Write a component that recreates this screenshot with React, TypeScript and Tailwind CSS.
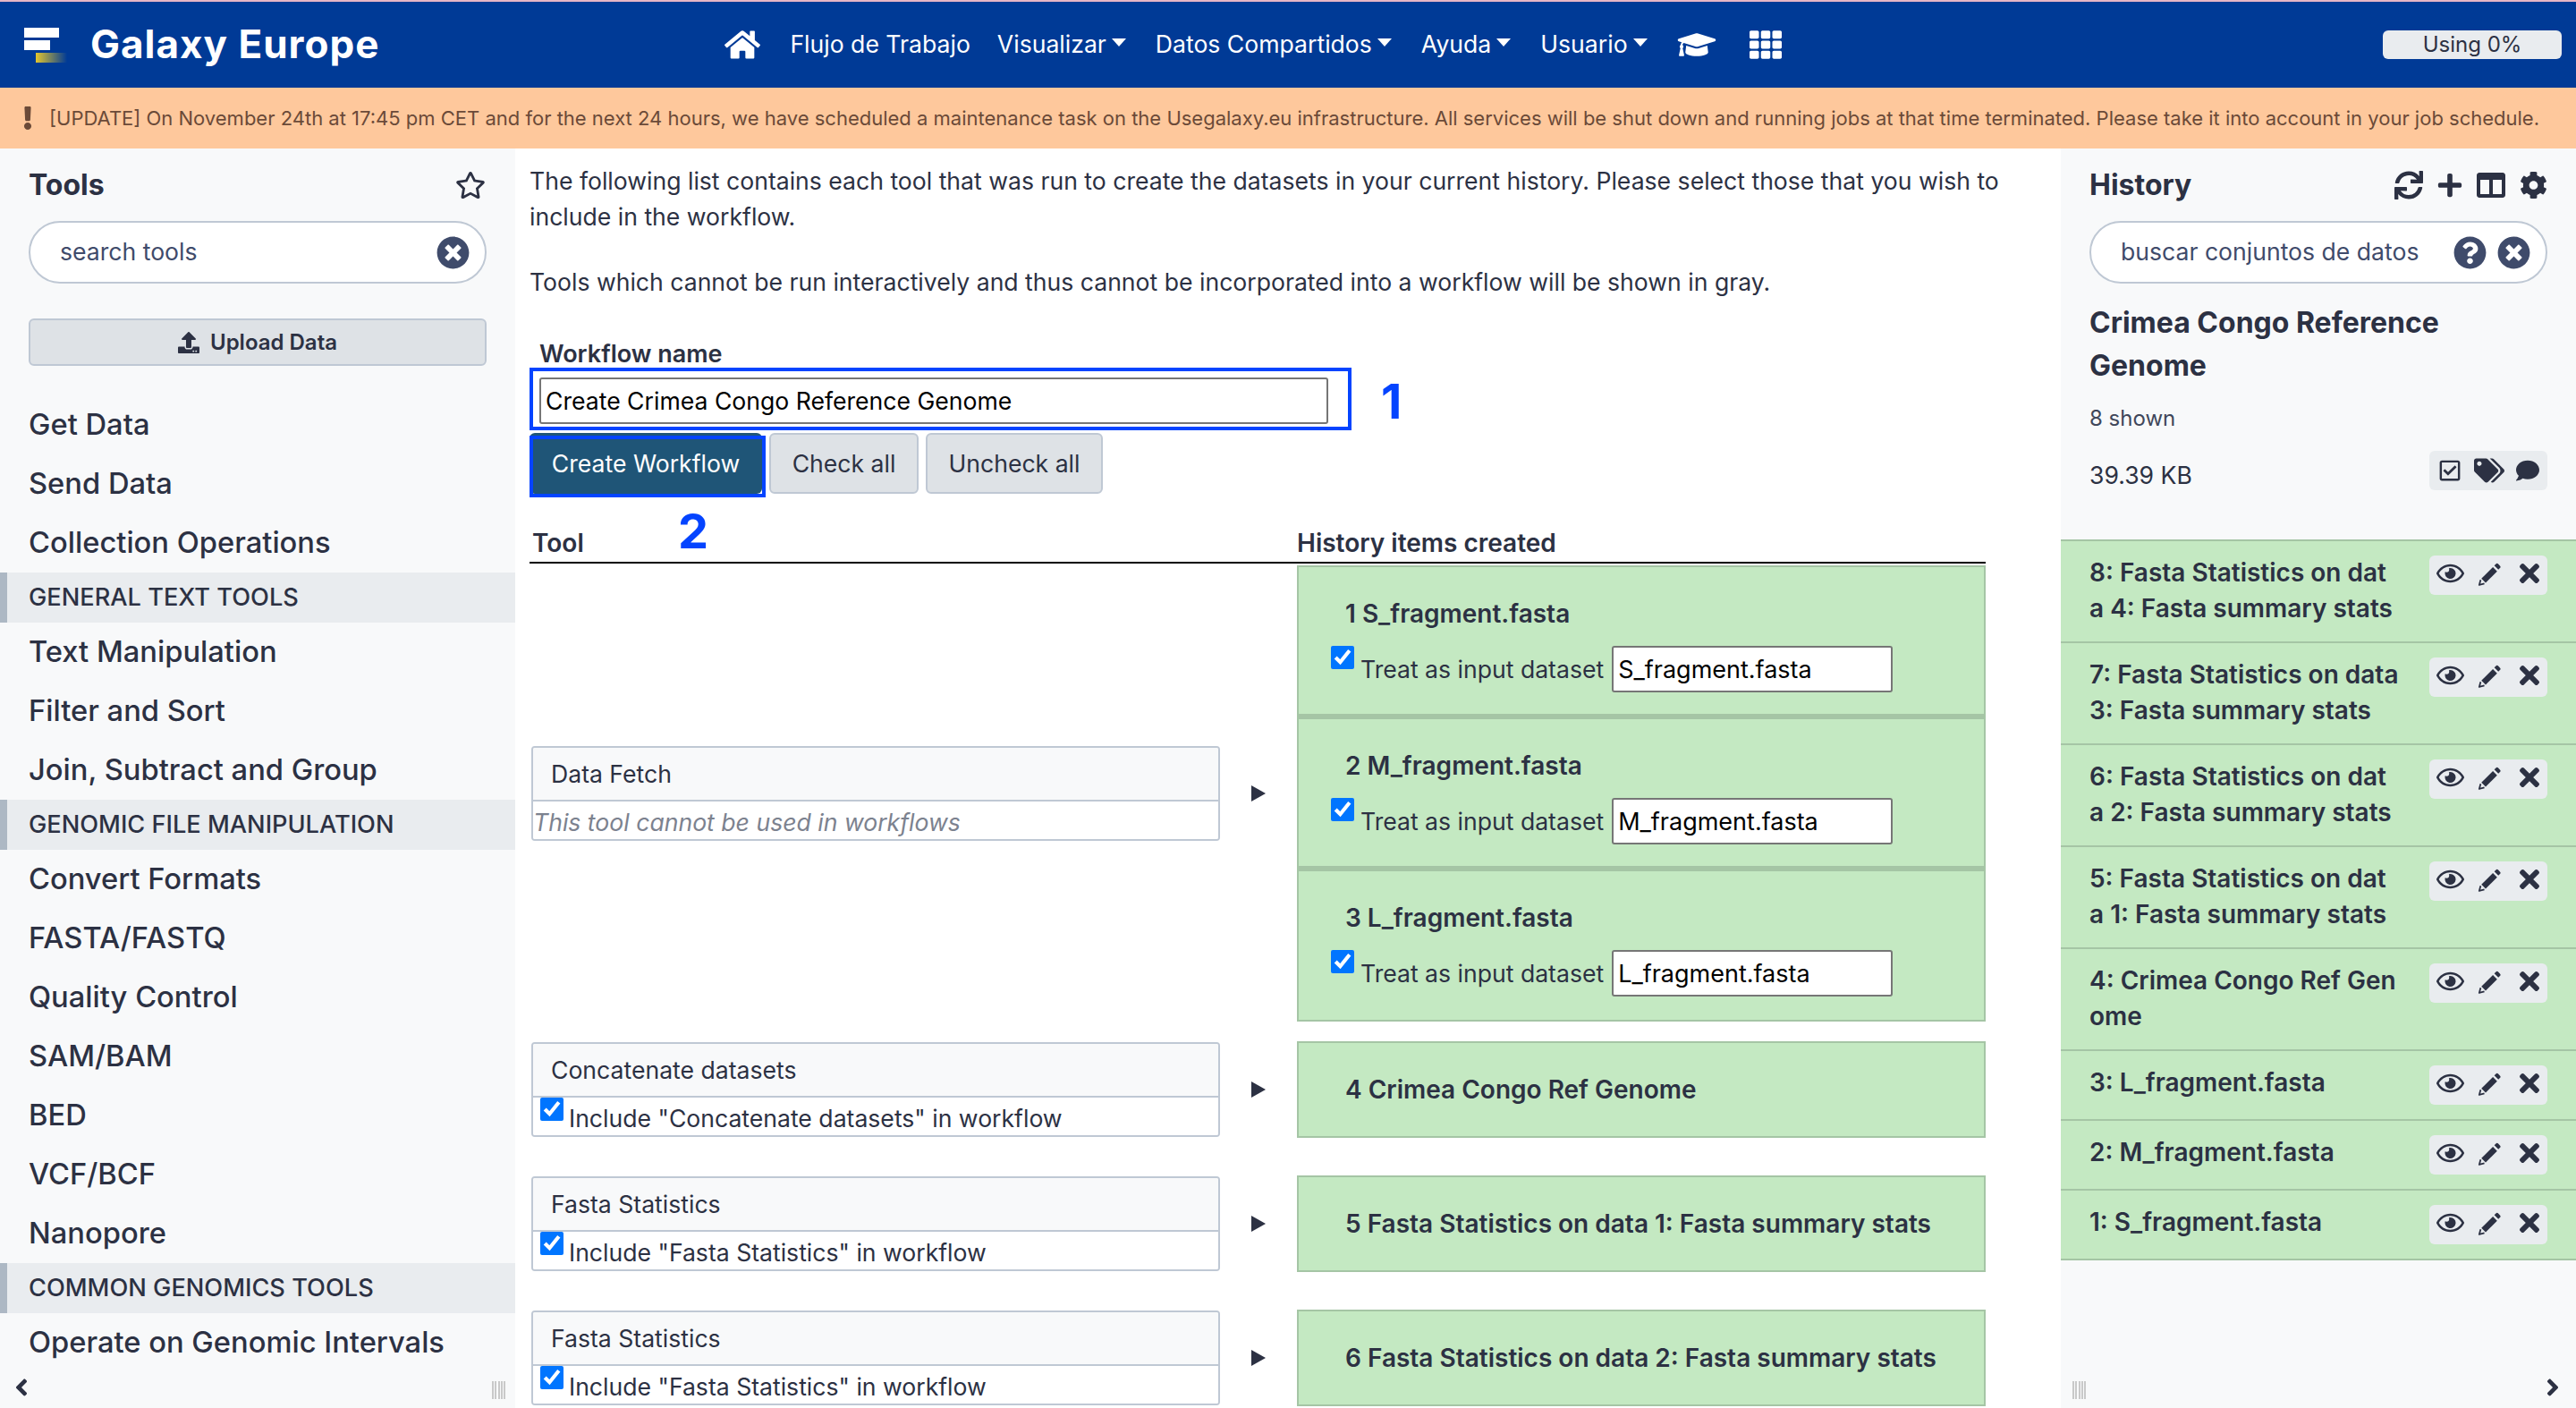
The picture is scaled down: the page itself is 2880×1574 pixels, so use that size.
import { FaCog, FaColumns, FaComment, FaExclamation, FaGraduationCap, FaHome, FaPlus, FaQuestionCircle, FaRegCheckSquare, FaRegEye, FaRegStar, FaSync, FaTags, FaTh, FaTimes, FaTimesCircle, FaUpload, FaAngleLeft, FaAngleRight } from 'react-icons/fa'

const NavLink = ({ label, caret, className }: { label: string; caret?: boolean; className?: string }) => (
  <span className={`flex items-center gap-[6px] ${className ?? ''}`}>
    {label}
    {caret && <span className="mb-[4px] h-0 w-0 border-x-[8px] border-t-[9px] border-x-transparent border-t-white" />}
  </span>
)

const Navbar = () => (
  <div className="relative flex h-[96px] shrink-0 items-center bg-[#003a96] text-[26.6px] text-white">
    <div className="ml-[27px] mr-[35px] flex w-[39px] flex-col gap-[3px]">
      <div className="h-[11px] w-[39px] bg-white" />
      <div className="h-[11px] w-[29px] bg-white" />
      <div className="ml-[13px] h-[11px] w-[35px] bg-gradient-to-r from-[#e3c62e] to-transparent" />
    </div>
    <span className="mb-[3px] text-[44px] font-bold tracking-[1px]">Galaxy Europe</span>
    <div className="ml-[386px] flex items-center gap-[33px]">
      <FaHome className="h-[36px] w-[40px]" />
      <NavLink label="Flujo de Trabajo" className="mr-[-3px]" />
      <NavLink label="Visualizar" caret />
      <NavLink label="Datos Compartidos" caret />
      <NavLink label="Ayuda" caret />
      <NavLink label="Usuario" caret />
      <FaGraduationCap className="h-[34px] w-[44px]" />
      <FaTh className="ml-[4px] h-[36px] w-[36px]" />
    </div>
    <div className="ml-auto mr-[16px] flex h-[32px] w-[200px] items-center justify-center rounded-[6px] bg-[#e9ecef] text-[24px] text-[#2c3143]">
      Using 0%
    </div>
  </div>
)

const toolItems = [
  { label: 'Get Data' },
  { label: 'Send Data' },
  { label: 'Collection Operations' },
  { label: 'GENERAL TEXT TOOLS', section: true },
  { label: 'Text Manipulation' },
  { label: 'Filter and Sort' },
  { label: 'Join, Subtract and Group' },
  { label: 'GENOMIC FILE MANIPULATION', section: true },
  { label: 'Convert Formats' },
  { label: 'FASTA/FASTQ' },
  { label: 'Quality Control' },
  { label: 'SAM/BAM' },
  { label: 'BED' },
  { label: 'VCF/BCF' },
  { label: 'Nanopore' },
  { label: 'COMMON GENOMICS TOOLS', section: true },
  { label: 'Operate on Genomic Intervals' },
]

const Grip = () => (
  <div className="flex h-[20px] w-[15px] justify-between">
    <span className="w-[2px] bg-[#c9c9c9]" />
    <span className="w-[2px] bg-[#c9c9c9]" />
    <span className="w-[2px] bg-[#c9c9c9]" />
    <span className="w-[2px] bg-[#c9c9c9]" />
    <span className="w-[2px] bg-[#c9c9c9]" />
  </div>
)

const ToolPanel = () => (
  <aside className="relative flex w-[576px] shrink-0 flex-col overflow-hidden bg-[#f8f9fa]">
    <div className="flex h-[81px] items-center justify-between pl-[32px] pr-[33px]">
      <span className="text-[32px] font-bold">Tools</span>
      <FaRegStar className="h-[32px] w-[34px]" />
    </div>
    <div className="mx-[32px] flex h-[70px] items-center justify-between rounded-[35px] border-2 border-[#bfc8d4] bg-white pl-[33px] pr-[17px] text-[26.6px] text-[#3f4b6b]">
      search tools
      <FaTimesCircle className="h-[37px] w-[37px] text-[#3f4b6b]" />
    </div>
    <button className="mx-[32px] mt-[39px] flex h-[53px] items-center justify-center gap-[12px] rounded-[6px] border-2 border-[#bfc8d4] bg-[#dee2e6] text-[24px] font-semibold">
      <FaUpload className="h-[24px] w-[24px]" />
      Upload Data
    </button>
    <div className="mt-[33px] flex flex-col">
      {toolItems.map((item) =>
        item.section ? (
          <div key={item.label} className="flex h-[56px] items-center border-l-[8px] border-[#adb8c4] bg-[#e9ecef] pl-[24px] text-[27.2px] font-medium">
            {item.label}
          </div>
        ) : (
          <div key={item.label} className="flex h-[66px] items-center pl-[32px] text-[32.7px] font-medium">
            {item.label}
          </div>
        ),
      )}
    </div>
    <FaAngleLeft className="absolute bottom-[8px] left-[14px] h-[30px] w-[20px]" />
    <div className="absolute bottom-[10px] left-[550px]">
      <Grip />
    </div>
  </aside>
)

const Check = () => <input type="checkbox" checked readOnly className="h-[26px] w-[26px] shrink-0 accent-[#0075ff]" />

const ToolCard = ({ name, disabled }: { name: string; disabled?: boolean }) => (
  <div className="w-[770px] shrink-0 overflow-hidden rounded-[4px] border-2 border-[#bfc8d4]">
    <div className="flex h-[60px] items-center border-b-2 border-[#bfc8d4] bg-[#f8f9fa] pl-[20px]">{name}</div>
    <div className="flex h-[42px] items-start gap-[6px] bg-white">
      {disabled ? (
        <span className="mt-[3px] italic text-[#7c828f]">This tool cannot be used in workflows</span>
      ) : (
        <>
          <span className="ml-[8px] flex">
            <Check />
          </span>
          <span className="mt-[3px]">Include "{name}" in workflow</span>
        </>
      )}
    </div>
  </div>
)

const Arrow = () => (
  <div className="flex w-[86px] shrink-0 justify-center">
    <span className="h-0 w-0 border-y-[9px] border-l-[16px] border-y-transparent border-l-[#2c3143]" />
  </div>
)

const DatasetBlock = ({ title, input }: { title: string; input: string }) => (
  <div className="flex h-[170px] flex-col border-2 border-b-[4px] border-[#a5c5a5] bg-[#c4e9c2] pl-[36px] last:border-b-2">
    <div className="ml-[16px] mt-[32px] text-[28px] font-semibold">{title}</div>
    <div className="mt-[16px] flex items-start">
      <Check />
      <span className="ml-[7px] mt-[6px]">Treat as input dataset</span>
      <input readOnly value={input} className="ml-[9px] h-[52px] w-[314px] rounded-[3px] border-2 border-[#767676] bg-white px-[5px] text-[27px] text-black" />
    </div>
  </div>
)

const OutputBlock = ({ title }: { title: string }) => (
  <div className="flex h-[108px] w-[770px] shrink-0 items-center border-2 border-[#a5c5a5] bg-[#c4e9c2] pl-[52px] text-[28px] font-semibold">{title}</div>
)

const SingleRow = ({ name, output, className }: { name: string; output: string; className: string }) => (
  <div className={`flex items-center ${className}`}>
    <ToolCard name={name} />
    <Arrow />
    <OutputBlock title={output} />
  </div>
)

const CenterPanel = () => (
  <main className="min-w-0 flex-1 overflow-hidden bg-white pl-[16px] pt-[16px] text-[26.6px] leading-[40px]">
    <p className="w-[1680px]">
      The following list contains each tool that was run to create the datasets in your current history. Please select those that you wish to include in the workflow.
    </p>
    <p className="mt-[33px]">Tools which cannot be run interactively and thus cannot be incorporated into a workflow will be shown in gray.</p>
    <div className="ml-[11px] mt-[46px] text-[27px] font-semibold leading-[30px]">Workflow name</div>
    <div className="flex h-[70px]">
      <div className="flex h-[70px] w-[919px] items-start border-[4px] border-[#0444ff] pl-[7px] pt-[7px]">
        <input readOnly value="Create Crimea Congo Reference Genome" className="h-[52px] w-[882px] rounded-[3px] border-2 border-[#767676] bg-white px-[5px] text-black" />
      </div>
      <span className="ml-[33px] text-[54px] font-bold leading-[76px] text-[#0444ff]">1</span>
    </div>
    <div className="mt-[3px] flex items-start">
      <div className="relative w-[264px]">
        <button className="h-[68px] w-[260px] rounded-[6px] bg-[#1f5577] text-white">Create Workflow</button>
        <div className="absolute left-0 top-[3px] h-[69px] w-[264px] border-[4px] border-[#0444ff]" />
      </div>
      <button className="ml-[4px] h-[68px] w-[167px] rounded-[6px] border-2 border-[#bfc8d4] bg-[#dee2e6]">Check all</button>
      <button className="ml-[8px] h-[68px] w-[198px] rounded-[6px] border-2 border-[#bfc8d4] bg-[#dee2e6]">Uncheck all</button>
    </div>
    <div className="relative flex h-[78px] w-[1628px] items-end border-b-2 border-black pb-[1px] text-[28px] font-semibold">
      <span className="ml-[3px] w-[855px]">Tool</span>
      <span>History items created</span>
      <span className="absolute left-[166px] top-[7px] text-[54px] font-bold leading-[70px] text-[#0444ff]">2</span>
    </div>
    <div className="mt-[2px] flex w-[1628px] items-center pl-[2px]">
      <ToolCard name="Data Fetch" disabled />
      <Arrow />
      <div className="w-[770px] shrink-0">
        <DatasetBlock title="1 S_fragment.fasta" input="S_fragment.fasta" />
        <DatasetBlock title="2 M_fragment.fasta" input="M_fragment.fasta" />
        <DatasetBlock title="3 L_fragment.fasta" input="L_fragment.fasta" />
      </div>
    </div>
    <div className="w-[1628px] pl-[2px]">
      <SingleRow name="Concatenate datasets" output="4 Crimea Congo Ref Genome" className="mt-[22px]" />
      <SingleRow name="Fasta Statistics" output="5 Fasta Statistics on data 1: Fasta summary stats" className="mt-[42px]" />
      <SingleRow name="Fasta Statistics" output="6 Fasta Statistics on data 2: Fasta summary stats" className="mt-[42px]" />
    </div>
  </main>
)

const PencilIcon = () => (
  <svg viewBox="0 0 24 24" className="h-[28px] w-[27px]" fill="currentColor">
    <path d="M16.6 3.4l1.6-1.6a1.6 1.6 0 0 1 2.3 0l1.7 1.7a1.6 1.6 0 0 1 0 2.3l-1.6 1.6z" />
    <path d="M15.2 4.8l4.2 4.2L8 20.4 3.8 16.2z" />
    <path d="M3 17.5L1.6 22.6l5.1-1.4" fill="none" stroke="currentColor" strokeWidth="1.6" strokeLinejoin="round" />
  </svg>
)

const historyItems = [
  ['8: Fasta Statistics on dat', 'a 4: Fasta summary stats'],
  ['7: Fasta Statistics on data', '3: Fasta summary stats'],
  ['6: Fasta Statistics on dat', 'a 2: Fasta summary stats'],
  ['5: Fasta Statistics on dat', 'a 1: Fasta summary stats'],
  ['4: Crimea Congo Ref Gen', 'ome'],
  ['3: L_fragment.fasta'],
  ['2: M_fragment.fasta'],
  ['1: S_fragment.fasta'],
]

const HistoryPanel = () => (
  <aside className="relative flex w-[576px] shrink-0 flex-col overflow-hidden bg-[#f8f9fa]">
    <div className="flex h-[81px] items-center justify-between px-[32px]">
      <span className="text-[32px] font-bold">History</span>
      <div className="flex items-center gap-[16px]">
        <FaSync className="h-[32px] w-[32px]" />
        <FaPlus className="h-[30px] w-[28px]" />
        <FaColumns className="h-[32px] w-[32px]" />
        <FaCog className="h-[32px] w-[31px]" />
      </div>
    </div>
    <div className="mx-[32px] flex h-[70px] items-center justify-between rounded-[35px] border-2 border-[#bfc8d4] bg-white pl-[33px] pr-[17px] text-[26.6px] text-[#3f4b6b]">
      buscar conjuntos de datos
      <div className="flex gap-[12px]">
        <FaQuestionCircle className="h-[37px] w-[37px]" />
        <FaTimesCircle className="h-[37px] w-[37px]" />
      </div>
    </div>
    <div className="ml-[32px] mt-[20px] w-[500px] text-[32px] font-bold leading-[48px]">Crimea Congo Reference Genome</div>
    <div className="ml-[32px] mt-[17px] text-[24px] leading-[36px] text-[#40475a]">8 shown</div>
    <div className="mx-[32px] mt-[18px] flex h-[44px] items-start justify-between text-[26.6px]">
      <span className="mt-[7px] leading-[40px]">39.39 KB</span>
      <div className="flex h-[44px] w-[132px] items-center rounded-[6px] bg-[#e9ecef] pl-[11px]">
        <FaRegCheckSquare className="h-[26px] w-[24px]" />
        <FaTags className="ml-[15px] h-[28px] w-[34px]" />
        <FaComment className="ml-[12px] h-[26px] w-[28px]" />
      </div>
    </div>
    <div className="mt-[55px] border-t-2 border-[#a5c5a5]">
      {historyItems.map((lines) => (
        <div key={lines[0]} className="flex items-start justify-between border-b-[2px] border-[#a5c5a5] bg-[#c4e9c2] px-[32px] py-[16px] text-[28px] font-semibold leading-[40px]">
          <div className="mb-[1px] mt-[-1px]">
            {lines.map((line) => (
              <div key={line}>{line}</div>
            ))}
          </div>
          <div className="flex h-[44px] w-[132px] items-center rounded-[6px] bg-[#e9ecef] pl-[8px]">
            <FaRegEye className="mb-[4px] h-[30px] w-[31px]" />
            <span className="ml-[15px] mb-[2px]">
              <PencilIcon />
            </span>
            <FaTimes className="mb-[4px] ml-[20px] h-[32px] w-[22px]" />
          </div>
        </div>
      ))}
    </div>
    <div className="absolute bottom-[10px] left-[13px]">
      <Grip />
    </div>
    <FaAngleRight className="absolute bottom-[8px] right-[16px] h-[30px] w-[20px]" />
  </aside>
)

export default function App() {
  return (
    <div className="flex h-[1574px] w-[2880px] flex-col overflow-hidden font-['Inter',sans-serif] text-[#2c3143]">
      <div className="h-[2px] shrink-0 bg-[#e6b5c6]" />
      <Navbar />
      <div className="flex h-[68px] shrink-0 items-center whitespace-nowrap bg-[#fec89c] pl-[26px] text-[22px] text-[#6b4a38]">
        <FaExclamation className="mr-[19px] h-[26px] w-[10px]" />
        [UPDATE] On November 24th at 17:45 pm CET and for the next 24 hours, we have scheduled a maintenance task on the Usegalaxy.eu infrastructure. All services will be shut down and running jobs at that time terminated. Please take it into account in your job schedule.
      </div>
      <div className="flex min-h-0 flex-1">
        <ToolPanel />
        <CenterPanel />
        <HistoryPanel />
      </div>
    </div>
  )
}
